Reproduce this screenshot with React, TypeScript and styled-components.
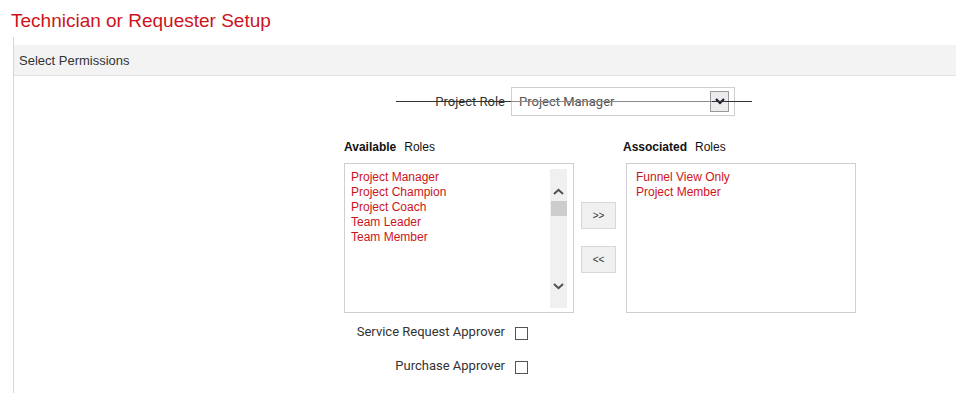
import React from 'react';
import styled, { createGlobalStyle } from 'styled-components';

const GlobalStyle = createGlobalStyle`
  body {
    margin: 0;
    background: #fff;
    font-family: "Liberation Sans", Arial, sans-serif;
  }
`;

const RED = "#cc141c";

const Page = styled.div`
  width: 956px;
  height: 393px;
  overflow: hidden;
`;

const Title = styled.h1`
  margin: 0;
  padding: 10px 0 0 11px;
  height: 27px;
  font-size: 19px;
  font-weight: normal;
  line-height: 22px;
  color: ${RED};
`;

const Panel = styled.div`
  margin-left: 13px;
  padding-top: 8px;
  border-left: 1px solid #d6d6d6;
  height: 360px;
`;

const SectionHeader = styled.div`
  height: 30px;
  display: flex;
  align-items: center;
  padding-left: 5px;
  background: #f3f3f3;
  border-bottom: 1px solid #e2e2e2;
  font-size: 13px;
  color: #333;
`;

const FieldRow = styled.div<{ $top: number }>`
  position: relative;
  display: grid;
  grid-template-columns: 497px auto;
  align-items: center;
  margin-top: ${(p) => p.$top}px;
`;

const Label = styled.label`
  text-align: right;
  font-family: Roboto, "Liberation Sans", sans-serif;
  font-size: 13px;
  color: #333;
  padding-right: 6px;
`;

const Select = styled.div`
  width: 210px;
  height: 27px;
  border: 1px solid #cfcfcf;
  display: flex;
  align-items: center;
  justify-content: space-between;
  padding: 0 5px 0 7px;
  font-family: Roboto, "Liberation Sans", sans-serif;
  font-size: 13px;
  color: #555;
`;

const SelectButton = styled.span`
  width: 17px;
  height: 19px;
  border: 1px solid #9a9a9a;
  background: #ececec;
  display: flex;
  align-items: center;
  justify-content: center;
`;

const StrikeLine = styled.div`
  position: absolute;
  left: 382px;
  width: 356px;
  top: 14px;
  height: 1px;
  background: linear-gradient(
    to right,
    #333 0,
    #333 115px,
    #8a8a8a 115px,
    #8a8a8a 316px,
    #333 316px
  );
`;

const RolesArea = styled.div`
  margin: 24px 0 0 330px;
  display: grid;
  grid-template-columns: 230px 42px 240px;
`;

const RoleColumn = styled.div`
  display: flex;
  flex-direction: column;
`;

const RoleCaption = styled.div<{ $shift?: number }>`
  font-size: 12px;
  color: #111;
  height: 14px;
  line-height: 14px;
  margin: 0 0 9px ${(p) => p.$shift ?? 0}px;
  b {
    font-weight: bold;
    margin-right: 8px;
  }
`;

const ListBox = styled.div<{ $inset: number }>`
  width: ${(p) => 222 - p.$inset}px;
  height: 139px;
  border: 1px solid #cfcfcf;
  display: flex;
  justify-content: space-between;
  padding: 5px 6px 4px ${(p) => p.$inset}px;
`;

const Options = styled.ul`
  list-style: none;
  margin: 0;
  padding: 1px 0 0 0;
  font-size: 12px;
  line-height: 15px;
  color: ${RED};
`;

const ScrollTrack = styled.div`
  width: 17px;
  height: 139px;
  background: #f0f0f0;
  display: flex;
  flex-direction: column;
  align-items: center;
  padding: 19px 0 18px;
  box-sizing: border-box;
`;

const ScrollThumb = styled.div`
  width: 16px;
  height: 15px;
  background: #cdcdcd;
  margin-top: 6px;
`;

const Spacer = styled.div`
  flex: 1;
`;

const ButtonStack = styled.div`
  display: flex;
  flex-direction: column;
  gap: 17px;
  padding: 62px 0 0 7px;
`;

const MoveButton = styled.button`
  width: 35px;
  height: 27px;
  border: 1px solid #d8d8d8;
  background: #f0f0f0;
  font-family: "Liberation Sans", Arial, sans-serif;
  font-size: 10px;
  color: #333;
  padding: 0;
`;

const Assoc = styled(RoleColumn)`
  margin-left: 10px;
`;

const CheckRow = styled.div<{ $top: number }>`
  display: grid;
  grid-template-columns: 497px auto;
  align-items: center;
  margin-top: ${(p) => p.$top}px;
`;

const CheckBox = styled.span`
  display: block;
  width: 11px;
  height: 11px;
  border: 1px solid #555;
  background: #fff;
  margin: 4px 0 0 4px;
`;

const Chevron = ({ up }: { up?: boolean }) => (
  <svg width="11" height="7" viewBox="0 0 11 7">
    <path
      d={up ? "M1 6 L5.5 1.8 L10 6" : "M1 1 L5.5 5.2 L10 1"}
      fill="none"
      stroke="#505050"
      strokeWidth="2"
    />
  </svg>
);

const available = ["Project Manager", "Project Champion", "Project Coach", "Team Leader", "Team Member"];
const associated = ["Funnel View Only", "Project Member"];

export default function App() {
  return (
    <Page>
      <GlobalStyle />
      <Title>Technician or Requester Setup</Title>
      <Panel>
        <SectionHeader>Select Permissions</SectionHeader>

        <FieldRow $top={11}>
          <Label>Project Role</Label>
          <Select>
            <span>Project Manager</span>
            <SelectButton>
              <svg width="10" height="7" viewBox="0 0 10 7">
                <path d="M1 1 L5 5 L9 1" fill="none" stroke="#1a1a2e" strokeWidth="2.2" />
              </svg>
            </SelectButton>
          </Select>
          <StrikeLine />
        </FieldRow>

        <RolesArea>
          <RoleColumn>
            <RoleCaption>
              <b>Available</b>Roles
            </RoleCaption>
            <ListBox $inset={6}>
              <Options>
                {available.map((r) => (
                  <li key={r}>{r}</li>
                ))}
              </Options>
              <ScrollTrack>
                <Chevron up />
                <ScrollThumb />
                <Spacer />
                <Chevron />
              </ScrollTrack>
            </ListBox>
          </RoleColumn>

          <ButtonStack>
            <MoveButton>&gt;&gt;</MoveButton>
            <MoveButton>&lt;&lt;</MoveButton>
          </ButtonStack>

          <Assoc>
            <RoleCaption $shift={-3}>
              <b>Associated</b>Roles
            </RoleCaption>
            <ListBox $inset={9}>
              <Options>
                {associated.map((r) => (
                  <li key={r}>{r}</li>
                ))}
              </Options>
            </ListBox>
          </Assoc>
        </RolesArea>

        <CheckRow $top={10}>
          <Label>Service Request Approver</Label>
          <CheckBox />
        </CheckRow>
        <CheckRow $top={17}>
          <Label>Purchase Approver</Label>
          <CheckBox />
        </CheckRow>
      </Panel>
    </Page>
  );
}
